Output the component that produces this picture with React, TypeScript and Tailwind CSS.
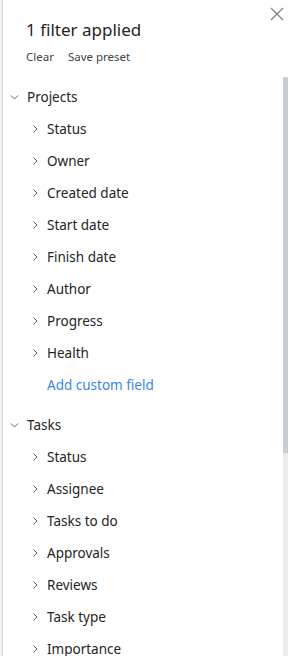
import React from "react";

const projectFields = ["Status", "Owner", "Created date", "Start date", "Finish date", "Author", "Progress", "Health"];
const taskFields = ["Status", "Assignee", "Tasks to do", "Approvals", "Reviews", "Task type", "Importance"];

const ChevronRight = () => (
  <svg width="6" height="10" viewBox="0 0 6 10" fill="none" stroke="#616161" strokeWidth="1">
    <path d="M1.5 1.5l3.5 3.5-3.5 3.5" />
  </svg>
);

const ChevronDown = () => (
  <svg width="9" height="6" viewBox="0 0 9 6" fill="none" stroke="#616161" strokeWidth="1">
    <path d="M1 1.5l3.5 3.5 3.5-3.5" />
  </svg>
);

const Group: React.FC<{ title: string; fields: string[]; addCustom?: boolean }> = ({ title, fields, addCustom }) => (
  <div>
    <div className="flex items-center h-[32px] pl-[7px]">
      <span className="w-[17px] flex"><ChevronDown /></span>
      <span className="text-[13.5px] text-[#242424]">{title}</span>
    </div>
    {fields.map((f) => (
      <div key={f} className="flex items-center h-[32px] pl-[29px]">
        <span className="w-[15px] flex"><ChevronRight /></span>
        <span className="text-[13.5px] text-[#242424]">{f}</span>
      </div>
    ))}
    {addCustom && (
      <div className="flex items-center h-[32px] pl-[44px] text-[13.5px] text-[#3b86e6]">Add custom field</div>
    )}
  </div>
);

export default function App() {
  return (
    <div className="w-[289px] h-[656px] bg-[#f3f3f3] pl-[2px] overflow-hidden" style={{ fontFamily: '"Noto Sans", "Open Sans", sans-serif' }}>
      <div className="h-full bg-white border-l border-[#d4d4d4] flex flex-col relative">
        <button className="absolute right-[4px] top-[6px] w-[16px] h-[16px] flex items-center justify-center" aria-label="Close">
          <svg width="14" height="14" viewBox="0 0 14 14" stroke="#7a7a7a" strokeWidth="1.1" fill="none">
            <path d="M1 1l12 12M13 1L1 13" />
          </svg>
        </button>

        {/* Header */}
        <div className="pl-[23px] pt-[19px] h-[77px] shrink-0">
          <h2 className="text-[17px] leading-[22px] text-[#242424] font-normal">1 filter applied</h2>
          <div className="flex gap-[14px] mt-[8px] text-[11.5px] leading-[16px] text-[#424242]">
            <span>Clear</span>
            <span>Save preset</span>
          </div>
        </div>

        {/* Body */}
        <div className="flex-1 flex min-h-0">
          <div className="flex-1 overflow-hidden pt-[4px]">
            <Group title="Projects" fields={projectFields} addCustom />
            <div className="h-[8px]" />
            <Group title="Tasks" fields={taskFields} />
          </div>
          <div className="w-[5px] mr-[1px] flex flex-col bg-[#ebebed]">
            <div className="h-[376px] bg-[#c8ccd3] rounded-t-[2px]" />
          </div>
        </div>
      </div>
    </div>
  );
}
